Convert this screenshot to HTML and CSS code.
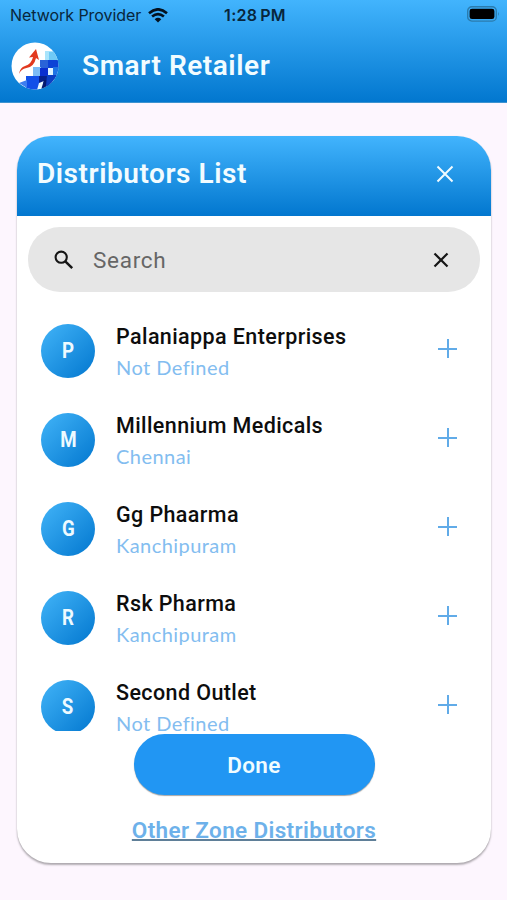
FILE: index.html
```
<!DOCTYPE html>
<html lang="en">
	<head>
		<meta charset="utf-8" />
		<title>Smart Retailer</title>
		<link rel="stylesheet" href="styles.css">
	</head>

	<body>
		<header class="top">
			<div class="status">
				<div class="provider">
					<span>Network Provider</span>
					<svg width="20" height="15" viewBox="0 0 20 15">
						<path d="M1 5.2Q10-2.6 19 5.2M4.1 8.6Q10 3.6 15.9 8.6" fill="none" stroke="#04121f" stroke-width="2.6" />
						<path d="M6.7 11.2Q10 8.4 13.3 11.2L10 14.6Z" fill="#04121f" />
					</svg>
				</div>
				<span class="time">1:28 PM</span>
				<svg class="battery" width="33" height="16" viewBox="0 0 33 16">
					<rect x="0.7" y="0.7" width="28.6" height="14.4" rx="4.2" fill="none" stroke="#2b7cae" stroke-width="1.4" />
					<rect x="2.6" y="2.7" width="24.8" height="10.4" rx="2.4" fill="#000" />
					<path d="M31 5.8q1.6 2.1 0 4.2z" fill="#2b7cae" />
				</svg>
			</div>
			<div class="brand">
				<svg class="logo" width="48" height="48" viewBox="0 0 48 48">
					<clipPath id="disc"><circle cx="24" cy="24" r="23.5" /></clipPath>
					<g clip-path="url(#disc)">
						<rect width="48" height="48" fill="#fff" />
						<path d="M34 9h8v10h-8z" fill="#a9e4fb" />
						<path d="M38 10h10v10H38z" fill="#6fcaf6" />
						<path d="M29 18h9v9h-9z" fill="#2a63d8" />
						<path d="M37 18h11v9H37z" fill="#0d43d6" />
						<path d="M22 25h8v9h-8z" fill="#7cbcf6" />
						<path d="M29 26h9v9h-9z" fill="#0a2fd0" />
						<path d="M37 26h6v8h-6z" fill="#dff4ff" />
						<path d="M42 25h6v12h-6z" fill="#1e74e4" />
						<path d="M15 34h14v14H15z" fill="#1250e8" />
						<path d="M8 41l8-3v8z" fill="#3d7ef0" />
						<path d="M28 34h9v7h-9z" fill="#06208c" />
						<path d="M28 41l5-2-3 9h-4z" fill="#e8f8ff" />
						<path d="M33 38h9l-7 10h-5z" fill="#04196f" />
						<path d="M36 33h10l-7 11h-4z" fill="#0b3fc4" />
					</g>
					<path d="M8 32Q9 25.5 14 24Q20.5 22 22 15L18 15.5L25 7L28 18L25 16Q23 25 15.5 26Q10 27 8 32Z" fill="#e2391f" />
				</svg>
				<h1>Smart Retailer</h1>
			</div>
		</header>

		<main class="card">
			<div class="card-head">
				<h2>Distributors List</h2>
				<svg width="18" height="18" viewBox="0 0 18 18">
					<path d="M1.5 1.5L16.5 16.5M16.5 1.5L1.5 16.5" stroke="#f0fbff" stroke-width="2" />
				</svg>
			</div>

			<div class="search">
				<svg class="lens" width="20" height="20" viewBox="0 0 20 20">
					<circle cx="7.2" cy="7.2" r="5.6" fill="none" stroke="#161616" stroke-width="2.1" />
					<path d="M11.3 11.3L18.2 18.2" stroke="#161616" stroke-width="2.5" />
				</svg>
				<span>Search</span>
				<svg width="16" height="16" viewBox="0 0 16 16">
					<path d="M1.5 1.5L14.5 14.5M14.5 1.5L1.5 14.5" stroke="#161616" stroke-width="2.2" />
				</svg>
			</div>

			<ul class="list">
				<li>
					<div class="avatar"><span>P</span></div>
					<div class="info">
						<div class="name">Palaniappa Enterprises</div>
						<div class="place">Not Defined</div>
					</div>
					<i class="plus"></i>
				</li>
				<li>
					<div class="avatar"><span>M</span></div>
					<div class="info">
						<div class="name">Millennium Medicals</div>
						<div class="place">Chennai</div>
					</div>
					<i class="plus"></i>
				</li>
				<li>
					<div class="avatar"><span>G</span></div>
					<div class="info">
						<div class="name">Gg Phaarma</div>
						<div class="place">Kanchipuram</div>
					</div>
					<i class="plus"></i>
				</li>
				<li>
					<div class="avatar"><span>R</span></div>
					<div class="info">
						<div class="name">Rsk Pharma</div>
						<div class="place">Kanchipuram</div>
					</div>
					<i class="plus"></i>
				</li>
				<li>
					<div class="avatar"><span>S</span></div>
					<div class="info">
						<div class="name">Second Outlet</div>
						<div class="place">Not Defined</div>
					</div>
					<i class="plus"></i>
				</li>
			</ul>

			<button type="button" class="done">Done</button>
			<a class="other">Other Zone Distributors</a>
		</main>
	</body>
</html>
```
FILE: styles.css
```
* {
	box-sizing: border-box;
}
html,
body,
h1,
h2,
ul {
	margin: 0;
	padding: 0;
}
body {
	height: 900px;
	overflow: hidden;
	background: #fdf6fe;
	font-family: Roboto, "Liberation Sans", sans-serif;
}
svg {
	display: block;
	flex: none;
}
.top {
	height: 103px;
	background: linear-gradient(#42b4fd, #0277cf);
	border-bottom: 1px solid #3d93d0;
}
.status {
	display: grid;
	grid-template-columns: 1fr auto 1fr;
	align-items: center;
	height: 30px;
	padding: 0 7px 0 10px;
	color: #08263c;
	font: 500 16px/30px Inter, sans-serif;
}
.provider {
	display: flex;
	align-items: center;
	gap: 7px;
	font-weight: 400;
	letter-spacing: -0.05px;
}
.time {
	font-weight: 600;
	letter-spacing: 0.3px;
	word-spacing: -1.5px;
}
.battery {
	justify-self: end;
	margin-top: -2px;
}
.brand {
	display: flex;
	align-items: center;
	gap: 23px;
	height: 72px;
	padding: 0 11px;
}
h1,
h2 {
	padding-bottom: 2px;
	color: #f2fcff;
	font-size: 28px;
	font-weight: 600;
	letter-spacing: 0.55px;
	white-space: nowrap;
}
.card {
	display: flex;
	flex-direction: column;
	width: 474px;
	height: 727px;
	margin: 33px 0 0 17px;
	overflow: hidden;
	background: #fff;
	border-radius: 34px;
	box-shadow: 0 2px 2px rgba(0, 0, 0, 0.3), 0 0 1px rgba(0, 0, 0, 0.15);
}
.card-head {
	display: flex;
	flex: none;
	align-items: center;
	justify-content: space-between;
	height: 80px;
	padding: 0 37px 4px 20px;
	background: linear-gradient(#42b4fd, #0277cf);
}
.search {
	display: flex;
	flex: none;
	align-items: center;
	height: 65px;
	margin: 11px 11px 14px;
	padding: 1px 31px 0 26px;
	background: #e6e6e6;
	border-radius: 32px;
	color: #666;
	font-size: 22.5px;
	letter-spacing: 0.7px;
}
.search span {
	flex: 1;
	margin-left: 19px;
}
.list {
	flex: none;
	height: 425px;
	overflow: hidden;
	list-style: none;
}
.list li {
	display: flex;
	align-items: center;
	height: 89px;
	padding: 0 34px 0 24px;
}
.avatar {
	width: 54px;
	height: 54px;
	border-radius: 50%;
	background: linear-gradient(135deg, #42b4f8, #0277cf);
	color: #eefaff;
	font-size: 21.5px;
	font-weight: 700;
	line-height: 54px;
	text-align: center;
}
.avatar span {
	display: inline-block;
	transform: scaleX(0.87);
}
.info {
	flex: 1;
	margin-left: 21px;
	padding-top: 2px;
	white-space: nowrap;
}
.name {
	color: #0d0d0d;
	font-size: 21.5px;
	font-weight: 500;
	line-height: 31px;
	letter-spacing: 0.4px;
}
.place {
	color: #83bdf0;
	font: 20px/31px Lato, sans-serif;
	letter-spacing: 0.45px;
	font-variant-ligatures: none;
}
.plus {
	width: 19px;
	height: 19px;
	margin-top: -4px;
	background: linear-gradient(#61abe8, #61abe8) center / 19px 2px no-repeat, linear-gradient(#61abe8, #61abe8) center / 2px 19px no-repeat;
}
.done {
	flex: none;
	align-self: center;
	width: 241px;
	height: 61px;
	margin: 3px 0 0;
	padding: 0;
	border: 0;
	border-radius: 31px;
	background: #2196f3;
	box-shadow: 0 1px 1px rgba(0, 0, 0, 0.35);
	color: #f0fcff;
	font: 600 22.5px Roboto, sans-serif;
	letter-spacing: 0.3px;
}
.other {
	align-self: center;
	margin-top: 22px;
	color: #6db1ea;
	font-size: 22.5px;
	font-weight: 600;
	line-height: 26px;
	letter-spacing: 0.35px;
	text-decoration: underline 1.5px #5f7f98;
	text-decoration-skip-ink: none;
	text-underline-offset: 1px;
}
```
